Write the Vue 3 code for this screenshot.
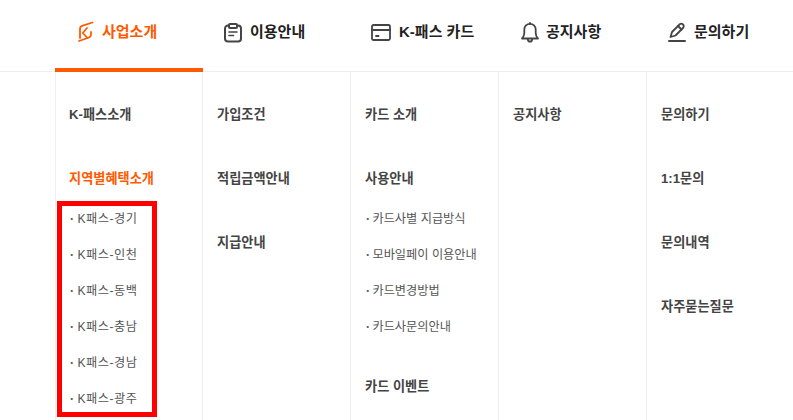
<template>
  <div class="page">
    <nav class="gnb">
      <a v-for="item in menus" :key="item.label" class="gnb-item" :class="{ on: item.active }">
        <svg v-if="item.icon === 'logo'" class="ico" width="22" height="22" viewBox="0 0 22 22" fill="none" stroke="#ff5a00" stroke-width="1.8" stroke-linecap="round" stroke-linejoin="round">
          <path d="M16.500 1.500 6 4.800Q4 5.500 4 7.500V17" />
          <path d="M3 20l10-3.500q2-.7 2-3V11" />
          <path d="M11 7 6.800 12l4.700 5" />
        </svg>
        <svg v-else-if="item.icon === 'clip'" class="ico" width="22" height="22" viewBox="0 0 22 22" fill="none" stroke="#444" stroke-width="2" stroke-linecap="round" stroke-linejoin="round">
          <path d="M5 4.500H4a3 3 0 0 0-3 3v10a3 3 0 0 0 3 3h10a3 3 0 0 0 3-3v-10a3 3 0 0 0-3-3h-1" />
          <rect x="5" y="3" width="8" height="4" rx="1" />
          <path d="M5 11h8M5 14.500h4.500" stroke-width="1.600" />
        </svg>
        <svg v-else-if="item.icon === 'card'" class="ico wide" width="24" height="22" viewBox="0 0 24 22" fill="none" stroke="#444" stroke-width="1.800" stroke-linecap="round" stroke-linejoin="round">
          <rect x="1" y="4" width="18" height="15" rx="1.500" />
          <path d="M1 9h18" />
          <path d="M5 15h2.500" />
        </svg>
        <svg v-else-if="item.icon === 'bell'" class="ico" width="22" height="22" viewBox="0 0 22 22" fill="none" stroke="#444" stroke-width="1.800" stroke-linecap="round" stroke-linejoin="round">
          <path d="M2 17.500c1.500-1.500 2.300-3 2.300-5.500V8.500a5.700 5.700 0 0 1 11.400 0V12c0 2.500.8 4 2.300 5.500z" />
          <path d="M7.800 18.500c.3 1.500 1.100 2.200 2.200 2.200s1.900-.7 2.200-2.200" />
          <path d="M10 2.800V2" />
        </svg>
        <svg v-else class="ico" width="22" height="22" viewBox="0 0 22 22" fill="none" stroke="#444" stroke-width="1.800" stroke-linecap="round" stroke-linejoin="round">
          <path d="M2.500 16l1.500-5 7.500-7.500c1-1 2.500-1 3.500 0s1 2.500 0 3.500L7.500 14.500z" />
          <path d="M10 5l3.500 3.500" />
          <path d="M1 20h16" stroke-width="2" />
        </svg>
        <span class="gnb-label">{{ item.label }}</span>
      </a>
    </nav>

    <div class="panel">
      <div v-for="(col, i) in columns" :key="i" class="col">
        <template v-for="group in col" :key="group.title">
          <p class="title" :class="{ on: group.active }">{{ group.title }}</p>
          <ul v-if="group.subs" class="subs">
            <li v-for="sub in group.subs" :key="sub"><b class="dot">·</b> {{ sub }}</li>
          </ul>
        </template>
      </div>
      <div class="mark"></div>
    </div>
  </div>
</template>

<script setup>
const menus = [
  { label: '사업소개', icon: 'logo', active: true },
  { label: '이용안내', icon: 'clip' },
  { label: 'K-패스 카드', icon: 'card' },
  { label: '공지사항', icon: 'bell' },
  { label: '문의하기', icon: 'pen' },
]

const columns = [
  [
    { title: 'K-패스소개' },
    {
      title: '지역별혜택소개',
      active: true,
      subs: ['K패스-경기', 'K패스-인천', 'K패스-동백', 'K패스-충남', 'K패스-경남', 'K패스-광주'],
    },
  ],
  [{ title: '가입조건' }, { title: '적립금액안내' }, { title: '지급안내' }],
  [
    { title: '카드 소개' },
    {
      title: '사용안내',
      subs: ['카드사별 지급방식', '모바일페이 이용안내', '카드변경방법', '카드사문의안내'],
    },
    { title: '카드 이벤트' },
  ],
  [{ title: '공지사항' }],
  [{ title: '문의하기' }, { title: '1:1문의' }, { title: '문의내역' }, { title: '자주묻는질문' }],
]
</script>

<style>
html,
body {
  margin: 0;
  background: #fff;
  overflow: hidden;
}
</style>

<style scoped>
.page {
  width: 793px;
  height: 420px;
  overflow: hidden;
  font-family: "Liberation Sans", "Noto Sans CJK KR", sans-serif;
  color: #333;
}

.gnb {
  display: flex;
  height: 72px;
  padding-left: 55px;
  border-bottom: 1px solid #eee;
  box-sizing: border-box;
}

.gnb-item {
  flex: 0 0 148px;
  display: flex;
  align-items: flex-start;
  gap: 4px;
  padding: 21px 0 0 21px;
  box-sizing: border-box;
  color: #222;
}

.gnb-item.on {
  color: #ff5a00;
  border-bottom: 4px solid #ff5a00;
  height: 72px;
}

.gnb-label {
  font-size: 15px;
  font-weight: 700;
  line-height: 22px;
  white-space: nowrap;
}

.ico.wide {
  margin-left: -1px;
}

.panel {
  position: relative;
  display: flex;
  padding-left: 55px;
}

.col {
  flex: 0 0 148px;
  height: 348px;
  box-sizing: border-box;
  padding: 33px 0 0 14px;
  border-right: 1px solid #eee;
}

.col:first-child {
  padding-left: 13px;
  border-left: 1px solid #eee;
}

.col:first-child .subs li {
  letter-spacing: 0.5px;
}

.title {
  margin: 0 0 44px;
  font-size: 13.2px;
  font-weight: 700;
  line-height: 20px;
  color: #444;
}

.title.on {
  color: #ff5a00;
}

.title:has(+ .subs) {
  margin-bottom: 20px;
}

.subs {
  list-style: none;
  margin: 0 0 40px;
  padding: 0;
}

.subs li {
  font-size: 12.2px;
  line-height: 20px;
  margin-bottom: 16px;
  color: #555;
}

.dot {
  font-weight: 700;
  margin: 0 -1px 0 1px;
}

.mark {
  position: absolute;
  left: 57px;
  top: 129px;
  width: 100px;
  height: 216px;
  border: 5px solid #f00;
  box-sizing: border-box;
}
</style>
